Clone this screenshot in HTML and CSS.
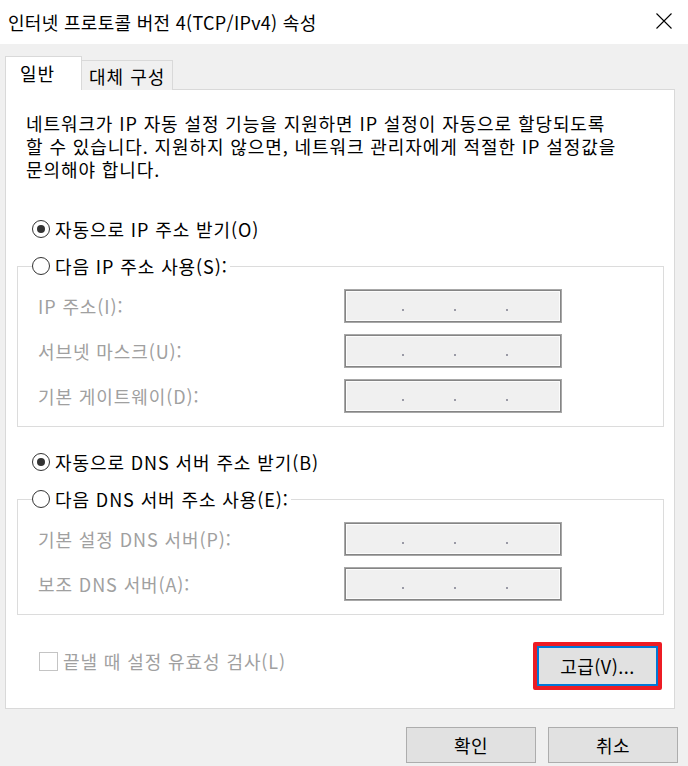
FILE: index.html
```html
<!DOCTYPE html>
<html lang="ko">
<head>
<meta charset="utf-8">
<title>인터넷 프로토콜 버전 4(TCP/IPv4) 속성</title>
<link rel="stylesheet" href="styles.css">
</head>
<body>
<div class="window">
  <header class="titlebar">
    <span class="title">인터넷 프로토콜 버전 4(TCP/IPv4) 속성</span>
    <svg class="close" width="16" height="16" viewBox="0 0 16 16"><path d="M0.5 0.5 L15.5 15.5 M15.5 0.5 L0.5 15.5" stroke="#000" stroke-width="1.1" fill="none"/></svg>
  </header>
  <main class="content">
    <div class="tabs">
      <div class="tab active">일반</div>
      <div class="tab">대체 구성</div>
    </div>
    <section class="panel">
      <p class="desc">네트워크가 IP 자동 설정 기능을 지원하면 IP 설정이 자동으로 할당되도록<br>할 수 있습니다. 지원하지 않으면, 네트워크 관리자에게 적절한 IP 설정값을<br>문의해야 합니다.</p>

      <div class="radio first"><span class="dot on"></span>자동으로 IP 주소 받기(O)</div>
      <fieldset class="group">
        <legend><span class="radio"><span class="dot"></span>다음 IP 주소 사용(S):</span></legend>
        <div class="field"><span class="lbl">IP 주소(I):</span><span class="ip"><i></i><i></i><i></i></span></div>
        <div class="field"><span class="lbl">서브넷 마스크(U):</span><span class="ip"><i></i><i></i><i></i></span></div>
        <div class="field"><span class="lbl">기본 게이트웨이(D):</span><span class="ip"><i></i><i></i><i></i></span></div>
      </fieldset>

      <div class="radio second"><span class="dot on"></span>자동으로 DNS 서버 주소 받기(B)</div>
      <fieldset class="group">
        <legend><span class="radio"><span class="dot"></span>다음 DNS 서버 주소 사용(E):</span></legend>
        <div class="field"><span class="lbl">기본 설정 DNS 서버(P):</span><span class="ip"><i></i><i></i><i></i></span></div>
        <div class="field"><span class="lbl">보조 DNS 서버(A):</span><span class="ip"><i></i><i></i><i></i></span></div>
      </fieldset>

      <div class="foot">
        <div class="check"><span class="box"></span>끝낼 때 설정 유효성 검사(L)</div>
        <div class="highlight"><button class="btn focused">고급(V)...</button></div>
      </div>
    </section>
    <div class="actions">
      <button class="btn">확인</button>
      <button class="btn">취소</button>
    </div>
  </main>
</div>
</body>
</html>
```
FILE: styles.css
```css
* { box-sizing: border-box; }
html, body { margin: 0; padding: 0; }
body {
  width: 688px;
  height: 766px;
  overflow: hidden;
  font-family: "Noto Sans CJK KR", "Noto Sans", sans-serif;
  font-size: 18px;
  color: #000;
  background: #f0f0f0;
}
.window { width: 688px; height: 766px; display: flex; flex-direction: column; }

.titlebar {
  height: 44px;
  background: #fff;
  display: flex;
  align-items: center;
  justify-content: space-between;
  padding: 0 16px 0 8px;
}
.title { font-size: 18px; line-height: 24px; letter-spacing: 0.3px; }
.close { display: block; margin-top: -2px; }

.content { flex: 1; background: #f0f0f0; padding: 12px 10px 0 5px; }

.tabs { display: flex; align-items: flex-end; height: 34px; margin-bottom: -1px; position: relative; z-index: 1; }
.tab {
  border: 1px solid #d9d9d9;
  border-bottom: none;
  font-size: 18px;
  line-height: 24px;
  letter-spacing: 1px;
  background: #f0f0f0;
  height: 30px;
  width: 92px;
  margin-left: -1px;
  padding: 3px 0 0 7px;
}
.tab.active {
  background: #fff;
  height: 34px;
  width: 77px;
  margin-left: 0;
  padding: 4px 0 0 14px;
}

.panel {
  background: #fff;
  border: 1px solid #d9d9d9;
  width: 670px;
  height: 620px;
  padding: 22px 10px 0 11px;
  letter-spacing: 0.9px;
}
.desc { margin: 0 0 0 9px; line-height: 23px; }

.radio { display: flex; align-items: center; height: 24px; line-height: 24px; }
.radio.first { margin: 36px 0 0 15px; }
.radio.second { margin: 23px 0 0 15px; }
.dot {
  width: 18px; height: 18px;
  border: 1px solid #333;
  border-radius: 50%;
  margin-right: 5px;
  display: flex; align-items: center; justify-content: center;
  background: #fff;
  flex: none;
}
.dot.on::after { content: ""; width: 8px; height: 8px; border-radius: 50%; background: #333; }

.group {
  margin: 13px 0 0 0;
  border: 1px solid #dcdcdc;
  padding: 11px 0 13px 0;
  min-width: 0;
}
.group legend { padding: 0 2px 0 0; margin-left: 14px; background: #fff; }

.field {
  display: grid;
  grid-template-columns: 306px 218px;
  padding-left: 20px;
  align-items: center;
  height: 34px;
  color: #a0a0a0;
  line-height: 24px;
}
.field + .field { margin-top: 11px; }
.ip {
  height: 34px;
  background: #f0f0f0;
  border: 1px solid #a8a8a8;
  box-shadow: inset 0 0 0 1px #858585, inset 0 0 0 2px #fcfcfc;
  display: flex;
  align-items: flex-end;
  padding: 0 0 11px 57px;
  gap: 50px;
}
.ip i { display: block; width: 2px; height: 2px; background: #9a9aa6; }

.foot { display: flex; justify-content: space-between; align-items: flex-start; margin: 27px 2px 0 22px; }
.check { display: flex; align-items: center; color: #a0a0a0; margin-top: 7px; line-height: 24px; }
.box { width: 19px; height: 19px; border: 1px solid #c4c4c4; margin-right: 5px; background: #fff; }
.highlight { border: 4px solid #ed1c24; border-radius: 2px; width: 129px; height: 48px; }

.btn {
  font-family: inherit;
  font-size: 18px;
  color: #000;
  background: #e1e1e1;
  border: 1px solid #adadad;
  width: 130px;
  height: 36px;
  padding: 0;
  line-height: 24px;
  letter-spacing: 0.5px;
}
.btn.focused { width: 121px; height: 40px; border: 2px solid #0078d7; }

.actions { display: flex; justify-content: flex-end; gap: 12px; margin-top: 18px; }
```
